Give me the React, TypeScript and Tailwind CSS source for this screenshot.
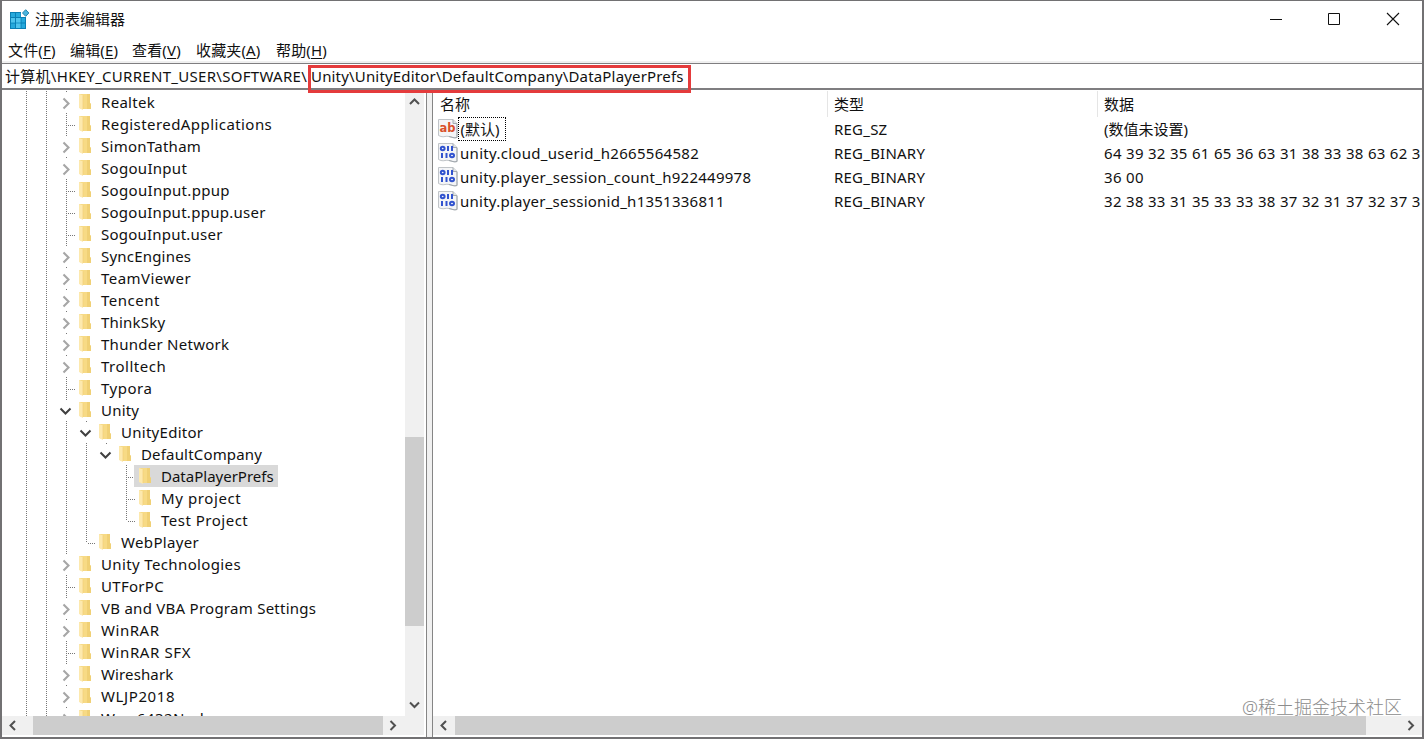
import React from "react";

type Cell = "blank" | "line" | "tee" | "end" | "closed" | "open";
type Node = { label: string; cells: Cell[]; track: string; selected?: boolean };

const top = (label: string, kind: Cell, track: string): Node => ({
  label,
  cells: ["line", "line", kind],
  track,
});

const nodes: Node[] = [
  top("Realtek", "closed", "tracking-[0.3px]"),
  top("RegisteredApplications", "tee", "tracking-[0.43px]"),
  top("SimonTatham", "closed", "tracking-[0.27px]"),
  top("SogouInput", "closed", "tracking-[0.3px]"),
  top("SogouInput.ppup", "tee", "tracking-[0.32px]"),
  top("SogouInput.ppup.user", "tee", "tracking-[0.27px]"),
  top("SogouInput.user", "tee", "tracking-[0.22px]"),
  top("SyncEngines", "closed", "tracking-[0.2px]"),
  top("TeamViewer", "closed", "tracking-[0.45px]"),
  top("Tencent", "closed", "tracking-[0.5px]"),
  top("ThinkSky", "closed", "tracking-[0.2px]"),
  top("Thunder Network", "closed", "tracking-[0.27px]"),
  top("Trolltech", "closed", "tracking-[0.5px]"),
  top("Typora", "tee", "tracking-[0.5px]"),
  top("Unity", "open", "tracking-[0.2px]"),
  { label: "UnityEditor", cells: ["line", "line", "line", "open"], track: "tracking-[0.27px]" },
  { label: "DefaultCompany", cells: ["line", "line", "line", "line", "open"], track: "tracking-[0.17px]" },
  {
    label: "DataPlayerPrefs",
    cells: ["line", "line", "line", "line", "blank", "tee"],
    track: "tracking-normal",
    selected: true,
  },
  { label: "My project", cells: ["line", "line", "line", "line", "blank", "tee"], track: "tracking-[0.6px]" },
  { label: "Test Project", cells: ["line", "line", "line", "line", "blank", "end"], track: "tracking-[0.5px]" },
  { label: "WebPlayer", cells: ["line", "line", "line", "end"], track: "tracking-[0.35px]" },
  top("Unity Technologies", "closed", "tracking-[0.37px]"),
  top("UTForPC", "tee", "tracking-[0.3px]"),
  top("VB and VBA Program Settings", "closed", "tracking-[0.26px]"),
  top("WinRAR", "closed", "tracking-[0.55px]"),
  top("WinRAR SFX", "tee", "tracking-[0.6px]"),
  top("Wireshark", "closed", "tracking-[0.12px]"),
  top("WLJP2018", "closed", "tracking-[0.6px]"),
  top("Wow6432Node", "closed", "tracking-[0.5px]"),
];

const values = [
  { name: "(默认)", type: "REG_SZ", data: "(数值未设置)", text: true, track: "tracking-normal" },
  {
    name: "unity.cloud_userid_h2665564582",
    type: "REG_BINARY",
    data: "64 39 32 35 61 65 36 63 31 38 33 38 63 62 31",
    track: "tracking-[0.3px]",
  },
  {
    name: "unity.player_session_count_h922449978",
    type: "REG_BINARY",
    data: "36 00",
    track: "tracking-[0.26px]",
  },
  {
    name: "unity.player_sessionid_h1351336811",
    type: "REG_BINARY",
    data: "32 38 33 31 35 33 33 38 37 32 31 37 32 37 31",
    track: "tracking-[0.25px]",
  },
];

function Guide({ kind }: { kind: Cell }) {
  return (
    <svg className="h-[22px] w-5 shrink-0" viewBox="0 0 20 22" fill="none">
      {(kind === "line" || kind === "tee") && (
        <path d="M10.5 0V22" stroke="#777" strokeDasharray="1 1" />
      )}
      {kind === "end" && <path d="M10.5 0V12" stroke="#777" strokeDasharray="1 1" />}
      {(kind === "tee" || kind === "end") && (
        <path d="M12 12.5H20" stroke="#777" strokeDasharray="1 1" />
      )}
      {(kind === "closed" || kind === "open") && <path d="M10.5 0V1" stroke="#777" />}
      {kind === "closed" && <path d="M7.5 7.5L12.5 12.5L7.5 17.5" stroke="#a6a6a6" strokeWidth="2.1" />}
      {kind === "open" && <path d="M4.5 9.5L9.5 14.5L14.5 9.5" stroke="#404040" strokeWidth="2" />}
    </svg>
  );
}

function Folder() {
  return (
    <svg className="h-[22px] w-3 shrink-0" viewBox="0 0 12 22">
      <path d="M0 3H11V12L12 13V18H2L0 16Z" fill="#f7da85" />
      <path d="M8 3H11V12L12 13V18H8Z" fill="#f0d075" />
      <path d="M0 3L4 4.500V19L0 17Z" fill="#fde9ae" />
      <path d="M4 4.500V18" stroke="#f0cf78" strokeWidth="0.7" />
    </svg>
  );
}

function TreeRow({ node }: { node: Node }) {
  return (
    <div className="flex h-[22px] shrink-0 items-center">
      {node.cells.map((c, i) => (
        <Guide key={i} kind={c} />
      ))}
      <div className={`flex h-[22px] items-center ${node.selected ? "-ml-0.5 bg-[#d9d9d9] pl-[5px] pr-1" : "pl-[3px]"}`}>
        <Folder />
        <span className={`ml-2.5 whitespace-pre ${node.track}`}>{node.label}</span>
      </div>
    </div>
  );
}

function Arrow({ dir, className }: { dir: "up" | "down" | "left" | "right"; className: string }) {
  const d = {
    up: "M5 12L9.5 7.5L14 12",
    down: "M5 7.5L9.5 12L14 7.5",
    left: "M12 5L7.5 9.5L12 14",
    right: "M7.5 5L12 9.5L7.5 14",
  }[dir];
  return (
    <svg className={`shrink-0 ${className}`} width="19" height="19" viewBox="0 0 19 19" fill="none">
      <path d={d} stroke="#505050" strokeWidth="2" />
    </svg>
  );
}

function ValueIcon({ text }: { text?: boolean }) {
  return (
    <svg className="h-5 w-5 shrink-0" viewBox="0 0 20 20" fill="none">
      <path d="M.5 .5H15L19 4.500V18.5C16 19.500 14 18 11 17.5C8 16.5 6 18.5 3 17.5L.5 16.5Z" fill="#f4f5f7" stroke="#c0c4c8" />
      <path d="M15 .5V4.500H19" fill="#dfe3e6" stroke="#a5abb1" />
      <path d="M19 5V18.5C16 19.500 14 18 11 17.5" stroke="#a0a7ad" />
      {text ? (
        <text x="1.5" y="12.5" fontSize="11.5" fontWeight="700" fill="#d9512c" fontFamily="DejaVu Sans">
          ab
        </text>
      ) : (
        <g stroke="#3153cf" strokeWidth="2">
          <ellipse cx="4.7" cy="5.5" rx="1.9" ry="1.7" />
          <path d="M10 3V8M14 3V8M4 10V15M8.500 10V15" />
          <ellipse cx="14" cy="12.500" rx="2" ry="1.700" />
        </g>
      )}
    </svg>
  );
}

function MenuItem({ label, hot, className }: { label: string; hot: string; className: string }) {
  return (
    <span className={`shrink-0 whitespace-nowrap ${className}`}>
      {label}(<span className="underline underline-offset-2">{hot}</span>)
    </span>
  );
}

export default function App() {
  return (
    <div className="flex h-[739px] w-[1424px] flex-col overflow-hidden border-x-2 border-t border-b-2 border-[#727173] bg-white font-['Noto_Sans','Noto_Sans_CJK_SC',sans-serif] text-[15px] leading-[22px] text-[#111]">
      <header className="flex h-[37px] shrink-0 items-center justify-between">
        <div className="flex items-center pb-0.5 pl-2">
          <svg className="mr-[5px] h-5 w-5" viewBox="0 0 20 20">
            <path d="M0 3H11V8H16V20H0Z" fill="#0a7fb4" />
            <path d="M1 4H5V8H1ZM6 4H10.500V8H6ZM1 9H5V13.500H1ZM6 9H10.500V13.500H6ZM11.500 9H15V13.500H11.500ZM1 14.500H5V19H1ZM6 14.500H10.500V19H6ZM11.500 14.500H15V19H11.500Z" fill="#25a9dc" />
            <path d="M1 9H5V13.500H1ZM6 9H10.500V13.500H6ZM6 14.500H10.500V19H6Z" fill="#4fc3ec" />
            <path d="M15.700 .7L18.900 4L15.700 7.300L12.500 4Z" fill="#4bb5de" stroke="#2585ad" />
          </svg>
          <span>注册表编辑器</span>
        </div>
        <div className="flex items-center gap-[45px] pr-[22px] pb-px">
          <svg width="14" height="14" viewBox="0 0 14 14"><path d="M2 7.500H14" stroke="#111" /></svg>
          <svg width="14" height="14" viewBox="0 0 14 14"><path d="M1.500 1.500H12.500V12.500H1.500Z" fill="none" stroke="#111" /></svg>
          <svg width="14" height="14" viewBox="0 0 14 14"><path d="M1 1L13 13M13 1L1 13" stroke="#111" strokeWidth="1.100" /></svg>
        </div>
      </header>
      <nav className="flex h-[25px] shrink-0 items-center border-b-2 border-[#f0f0f0] pl-1.5 tracking-[0.15px]">
        <MenuItem className="w-[62px]" label="文件" hot="F" />
        <MenuItem className="w-[62px]" label="编辑" hot="E" />
        <MenuItem className="w-16" label="查看" hot="V" />
        <MenuItem className="w-20" label="收藏夹" hot="A" />
        <MenuItem className="w-16" label="帮助" hot="H" />
      </nav>
      <div className="relative flex h-[27px] shrink-0 items-center border-t border-b-2 border-[#7f7e80] pl-[3px]">
        <span className="w-[306px] shrink-0 tracking-[0.29px] whitespace-nowrap">计算机\HKEY_CURRENT_USER\SOFTWARE\</span>
        <span className="tracking-[0.17px] whitespace-nowrap">Unity\UnityEditor\DefaultCompany\DataPlayerPrefs</span>
        <div className="absolute top-[1px] left-[306px] z-10 h-7 w-[383px] border-3 border-[#e43b3c]" />
      </div>
      <main className="flex min-h-0 flex-1">
        <section className="flex w-[425px] shrink-0 flex-col border-r border-[#858585] pt-px pb-0.5">
          <div className="flex min-h-0 flex-1">
            <div className="flex min-w-0 flex-1 flex-col overflow-hidden pl-[14px]">
              {nodes.map((n) => (
                <TreeRow key={n.label} node={n} />
              ))}
            </div>
            <div className="mr-0.5 flex w-[19px] flex-col bg-[#f0f0f0]">
              <Arrow dir="up" className="mt-px" />
              <div className="mt-[326px] h-[189px] bg-[#cdcdcd]" />
              <Arrow dir="down" className="mt-auto mb-0.5" />
            </div>
          </div>
          <div className="mr-0.5 flex h-[19px] shrink-0 bg-[#f0f0f0]">
            <Arrow dir="left" className="ml-px" />
            <div className="ml-[11px] h-[19px] w-[350px] bg-[#cdcdcd]" />
            <Arrow dir="right" className="" />
          </div>
        </section>
        <div className="w-[5px] shrink-0 bg-[#f0f0f0]" />
        <section className="relative flex min-w-0 flex-1 flex-col border-l border-[#858585] pt-px pb-0.5">
          <div className="flex min-h-0 flex-1 flex-col overflow-hidden">
            <div className="flex h-[26px] shrink-0 items-center pl-[7px]">
              <span className="w-[387px] shrink-0">名称</span>
              <span className="h-[26px] w-[270px] shrink-0 border-l border-[#e5e5e5] pt-0.5 pl-1.5">类型</span>
              <span className="h-[26px] flex-1 border-l border-[#e5e5e5] pt-0.5 pl-1.5">数据</span>
            </div>
            {values.map((v, i) => (
              <div key={v.name} className="flex h-6 shrink-0 items-center whitespace-nowrap pl-[5px]">
                <div className="flex w-[396px] shrink-0 items-center">
                  <ValueIcon text={v.text} />
                  {i === 0 ? (
                    <span className="flex h-6 w-12 items-center border border-dotted border-black pl-[1.5px]">{v.name}</span>
                  ) : (
                    <span className={`pl-0.5 ${v.track}`}>{v.name}</span>
                  )}
                </div>
                <span className="w-[270px] shrink-0 tracking-[0.22px]">{v.type}</span>
                <span className={i === 0 ? "" : "tracking-[0.31px]"}>{v.data}</span>
              </div>
            ))}
          </div>
          <div className="flex h-[19px] shrink-0 bg-[#f0f0f0]">
            <Arrow dir="left" className="ml-px" />
            <div className="ml-0.5 h-[19px] w-[911px] bg-[#cdcdcd]" />
            <Arrow dir="right" className="ml-auto mr-0.5" />
          </div>
          <div className="absolute right-[20px] bottom-[18px] font-light whitespace-nowrap text-[18px] leading-6 text-[#8c8c8c]">@稀土掘金技术社区</div>
        </section>
      </main>
    </div>
  );
}
